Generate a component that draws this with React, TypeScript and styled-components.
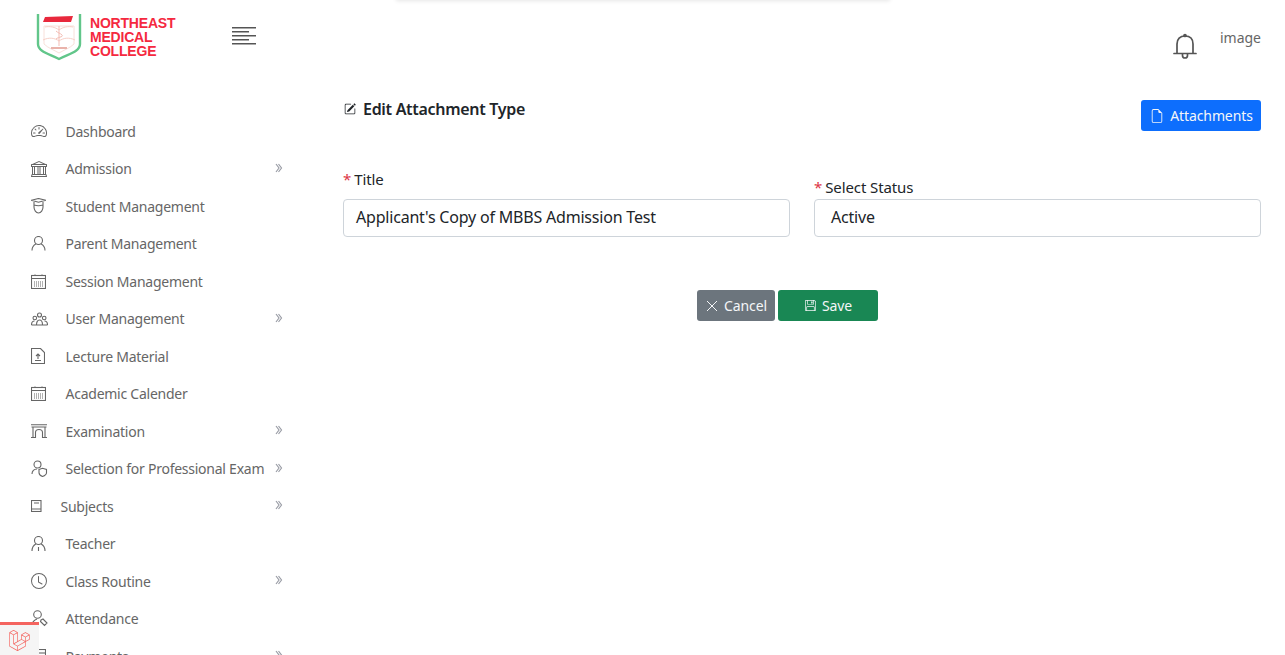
import React from "react";
import styled, { createGlobalStyle } from "styled-components";
import {
    BsBank,
    BsClock,
    BsFileEarmark,
    BsFloppy,
    BsPencilSquare,
    BsSpeedometer2,
} from "react-icons/bs";
import { SiLaravel } from "react-icons/si";

const GlobalStyle = createGlobalStyle`
    html, body {
        margin: 0;
        height: 100%;
        overflow: hidden;
        background: #fff;
        font-family: "Noto Sans", "Open Sans", sans-serif;
    }
`;

const Page = styled.div`
    height: 100vh;
    display: flex;
    flex-direction: column;
    overflow: hidden;
`;

const TopShadow = styled.div`
    position: fixed;
    top: -6px;
    left: 396px;
    width: 494px;
    height: 6px;
    box-shadow: 0 1px 4px rgba(0, 0, 0, 0.1);
`;

const Header = styled.header`
    flex: none;
    height: 70px;
    display: flex;
    align-items: flex-start;
    padding: 12px 24px 0 36px;
    box-sizing: border-box;
`;

const Brand = styled.div`
    display: flex;
    gap: 8px;
    width: 196px;
`;

const BrandName = styled.div`
    font-family: "Liberation Sans", Arial, sans-serif;
    font-weight: 700;
    font-size: 14px;
    line-height: 14px;
    letter-spacing: -0.2px;
    color: #f5293f;
    padding-top: 4px;
`;

const Burger = styled.svg`
    margin-top: 15px;
    display: block;
`;

const HeaderRight = styled.div`
    margin-left: auto;
    display: flex;
    gap: 23px;
    align-items: flex-start;
`;

const BellWrap = styled.span`
    display: block;
    margin-top: 21px;
    line-height: 0;
    color: #555;
`;

const UserImage = styled.span`
    font-size: 14px;
    line-height: 20px;
    margin-top: 16px;
    color: #666;
`;

const Body = styled.div`
    flex: 1;
    display: flex;
    min-height: 0;
`;

const Sidebar = styled.nav`
    flex: none;
    width: 319px;
    padding: 42.5px 36px 0 31px;
    box-sizing: border-box;
`;

const MenuItem = styled.div`
    height: 37.5px;
    display: flex;
    align-items: center;
    font-size: 14px;
    letter-spacing: -0.25px;
    color: #666;
    white-space: nowrap;
`;

const MenuIcon = styled.span<{ $narrow?: boolean }>`
    flex: none;
    width: ${(p) => (p.$narrow ? "29.5px" : "34.5px")};
    font-size: 16px;
    line-height: 0;
    color: #666;
`;

const MenuLabel = styled.span`
    flex: 1;
`;

const MenuArrow = styled.svg`
    flex: none;
    margin-top: -2px;
`;

const Main = styled.main`
    flex: 1;
    padding: 28px 24px 0 24px;
    min-width: 0;
`;

const TitleRow = styled.div`
    display: flex;
    justify-content: space-between;
    align-items: flex-start;
`;

const Title = styled.h1`
    margin: 0;
    font-size: 16px;
    line-height: 22px;
    font-weight: 600;
    letter-spacing: -0.3px;
    color: #212529;
    display: flex;
    align-items: center;
    gap: 7px;
    padding-left: 1px;

    svg {
        font-size: 12px;
    }
`;

const Button = styled.button<{ $bg: string; $width: number; $down?: number }>`
    box-sizing: border-box;
    width: ${(p) => p.$width}px;
    height: 31px;
    margin-top: ${(p) => p.$down ?? 0}px;
    border: 0;
    border-radius: 3px;
    background: ${(p) => p.$bg};
    color: #f4f6f8;
    font-family: inherit;
    font-size: 14px;
    letter-spacing: -0.1px;
    display: inline-flex;
    align-items: center;
    justify-content: center;
    gap: 6px;
    padding: 0 0 0 1px;
`;

const FormRow = styled.div`
    display: grid;
    grid-template-columns: 1fr 1fr;
    column-gap: 24px;
    align-items: end;
    margin-top: 38px;
`;

const Label = styled.label<{ $gap: number }>`
    display: block;
    font-size: 15px;
    line-height: 20px;
    letter-spacing: -0.1px;
    color: #212529;
    margin-bottom: ${(p) => p.$gap}px;
`;

const Required = styled.span`
    color: #dc3545;
    margin-right: 3px;
`;

const Field = styled.div<{ $indent: number }>`
    box-sizing: border-box;
    height: 38px;
    border: 1px solid #ced4da;
    border-radius: 4px;
    padding: 0 ${(p) => p.$indent}px;
    font-size: 16px;
    line-height: 34px;
    letter-spacing: -0.2px;
    color: #212529;
`;

const Actions = styled.div`
    display: flex;
    justify-content: center;
    gap: 3px;
    margin-top: 53px;
    padding-right: 29px;
`;

const DebugBar = styled.div`
    position: fixed;
    left: 0;
    bottom: 0;
    width: 39px;
    height: 30px;
    border-top: 3px solid #f4645f;
    background: #f5f5f5;
    display: flex;
    align-items: center;
    justify-content: center;
    color: #f4645f;
`;

const Crest = () => (
    <svg width="46" height="50" viewBox="0 0 46 50" fill="none">
        <path d="M2 2v30c0 8 12 10 21 15 9-5 21-7 21-15V2" stroke="#62c68a" strokeWidth="2.4" />
        <path d="M9 5l28-1-2 6H7z" fill="#e8283c" />
        <path d="M8 14h30v18c-4 4-10 6-15 9-5-3-11-5-15-9z" fill="#fff" stroke="#f8e0da" />
        <path d="M7 28c6-3 12-2 16 1 4-3 10-4 16-1M9 15c5-1 10 0 14 3 4-3 9-4 14-3" stroke="#f7d0c8" />
        <path d="M23 14v20M20 19c2 2 4 2 6 4s-4 2-6 4" stroke="#f3bdb4" />
        <path d="M15 36h16" stroke="#e9b3ab" strokeWidth="2" />
    </svg>
);

const Bell = () => (
    <svg width="24" height="26" viewBox="0 0 24 26" fill="none" stroke="currentColor" strokeWidth="1.7">
        <path d="M1 20.500h22" strokeLinecap="round" />
        <path d="M4 20.500V11C4 6 7 3 12 3s8 3 8 8v9.500" />
        <circle cx="12" cy="2.500" r="1" />
        <path d="M9.500 21v1.500a2.500 2.500 0 0 0 5 0V21" />
    </svg>
);

const icon = (w: number, h: number, body: React.ReactNode) => (
    <svg width={w} height={h} viewBox={`0 0 ${w} ${h}`} fill="none" stroke="currentColor" strokeWidth="1.1">
        {body}
    </svg>
);

const StudentIcon = () =>
    icon(
        15,
        16,
        <>
            <path d="M.5 2.200L7.500.5l7 1.700-7 2z" />
            <path d="M3 4v5c0 3 2 6 4.500 6S12 12 12 9V4M3 7c3 1 6 1 9 0" />
        </>
    );

const PersonIcon = () =>
    icon(
        15,
        15,
        <>
            <circle cx="7.500" cy="4.500" r="4" />
            <path d="M1 14.500c0-3.500 2-5.500 3.800-6.500M14 14.500c0-3.500-2-5.500-3.800-6.500" />
        </>
    );

const TeacherIcon = () =>
    icon(
        15,
        16,
        <>
            <circle cx="7.500" cy="4.500" r="4" />
            <path d="M1 15c0-3.500 2-6 3.800-7M14 15c0-3.500-2-6-3.800-7M7.500 11v4" />
        </>
    );

const CalendarIcon = () =>
    icon(
        15,
        15,
        <>
            <rect x=".5" y="1.500" width="14" height="13" />
            <path d="M.5 4.500h14M4 .5v1M11 .5v1" />
            <path d="M3 8h9M3 10h9M3 12h9" strokeDasharray="1 1" />
        </>
    );

const GroupIcon = () =>
    icon(
        17,
        14,
        <>
            <circle cx="8.500" cy="3" r="2" />
            <circle cx="3.800" cy="6" r="1.800" />
            <circle cx="13.200" cy="6" r="1.800" />
            <path d="M5.500 13c0-3 1-5 3-5s3 2 3 5M.5 13c0-2.500 1-4 3-4M16.500 13c0-2.500-1-4-3-4M.5 13h16" />
        </>
    );

const LectureIcon = () =>
    icon(
        14,
        16,
        <>
            <path d="M.5.500h9l4 4v11H.5z" />
            <path d="M7 11V6M5 8l2-2 2 2M4 12.500h6" />
        </>
    );

const ArchIcon = () =>
    icon(
        16,
        14,
        <path d="M0 .7h16M.5 3h15M2 3v10.500M14 3v10.500M0 13.500h4.500V8.500c0-2 1.500-3 3.500-3s3.500 1 3.500 3v5H16" />
    );

const ShieldUserIcon = () =>
    icon(
        17,
        17,
        <>
            <circle cx="6.500" cy="4.500" r="3.500" />
            <path d="M1 14c0-3 2-5 5-5" />
            <path d="M8 9.500l3.500-1.200 4 1.200v3.200c0 1.800-2 3-4 3.800-2-.8-3.500-2-3.500-3.800z" />
        </>
    );

const BookIcon = () =>
    icon(
        11,
        12,
        <>
            <rect x=".5" y=".5" width="9.500" height="11" />
            <path d="M.5 9h9.500M3 3h5" />
        </>
    );

const AttendanceIcon = () =>
    icon(
        17,
        18,
        <>
            <circle cx="6.500" cy="4.500" r="3.800" />
            <path d="M1 16c0-3 2-6 5-7" />
            <path d="M10 10l2-1 4 4-2.500 2.500-4-4z" />
        </>
    );

const PaymentsIcon = () =>
    icon(
        15,
        14,
        <>
            <rect x=".5" y=".5" width="14" height="13" />
            <path d="M.5 4h14" />
        </>
    );

const menu: { label: string; icon: React.ReactNode; arrow?: boolean; narrow?: boolean }[] = [
    { label: "Dashboard", icon: <BsSpeedometer2 /> },
    { label: "Admission", icon: <BsBank />, arrow: true },
    { label: "Student Management", icon: <StudentIcon /> },
    { label: "Parent Management", icon: <PersonIcon /> },
    { label: "Session Management", icon: <CalendarIcon /> },
    { label: "User Management", icon: <GroupIcon />, arrow: true },
    { label: "Lecture Material", icon: <LectureIcon /> },
    { label: "Academic Calender", icon: <CalendarIcon /> },
    { label: "Examination", icon: <ArchIcon />, arrow: true },
    { label: "Selection for Professional Exam", icon: <ShieldUserIcon />, arrow: true },
    { label: "Subjects", icon: <BookIcon />, arrow: true, narrow: true },
    { label: "Teacher", icon: <TeacherIcon /> },
    { label: "Class Routine", icon: <BsClock />, arrow: true },
    { label: "Attendance", icon: <AttendanceIcon /> },
    { label: "Payments", icon: <PaymentsIcon />, arrow: true },
];

export default function App() {
    return (
        <Page>
            <GlobalStyle />
            <TopShadow />
            <Header>
                <Brand>
                    <Crest />
                    <BrandName>
                        NORTHEAST
                        <br />
                        MEDICAL
                        <br />
                        COLLEGE
                    </BrandName>
                </Brand>
                <Burger width="24" height="18" viewBox="0 0 24 18" fill="#555">
                    <rect y="0" width="24" height="1.500" />
                    <rect y="4" width="17" height="1.500" />
                    <rect y="8" width="24" height="1.500" />
                    <rect y="12" width="17" height="1.500" />
                    <rect y="16" width="24" height="1.500" />
                </Burger>
                <HeaderRight>
                    <BellWrap>
                        <Bell />
                    </BellWrap>
                    <UserImage>image</UserImage>
                </HeaderRight>
            </Header>
            <Body>
                <Sidebar>
                    {menu.map((item) => (
                        <MenuItem key={item.label}>
                            <MenuIcon $narrow={item.narrow}>{item.icon}</MenuIcon>
                            <MenuLabel>{item.label}</MenuLabel>
                            {item.arrow && (
                                <MenuArrow width="8" height="10" viewBox="0 0 8 10" fill="none" stroke="#9a9da6" strokeWidth="1.200">
                                    <path d="M1 1l3 4-3 4M3.500 1l3 4-3 4" />
                                </MenuArrow>
                            )}
                        </MenuItem>
                    ))}
                </Sidebar>
                <Main>
                    <TitleRow>
                        <Title>
                            <BsPencilSquare />
                            Edit Attachment Type
                        </Title>
                        <Button $bg="#0d6efd" $width={120} $down={2}>
                            <BsFileEarmark />
                            Attachments
                        </Button>
                    </TitleRow>
                    <FormRow>
                        <div>
                            <Label $gap={10}>
                                <Required>*</Required>Title
                            </Label>
                            <Field $indent={12}>Applicant's Copy of MBBS Admission Test</Field>
                        </div>
                        <div>
                            <Label $gap={2}>
                                <Required>*</Required>Select Status
                            </Label>
                            <Field $indent={16}>Active</Field>
                        </div>
                    </FormRow>
                    <Actions>
                        <Button $bg="#6c757d" $width={78}>
                            <svg width="12" height="12" viewBox="0 0 12 12" stroke="currentColor" strokeWidth="1">
                                <path d="M1 1l10 10M11 1L1 11" />
                            </svg>
                            Cancel
                        </Button>
                        <Button $bg="#198754" $width={100}>
                            <BsFloppy size={11} />
                            Save
                        </Button>
                    </Actions>
                </Main>
            </Body>
            <DebugBar>
                <SiLaravel size={21} />
            </DebugBar>
        </Page>
    );
}
